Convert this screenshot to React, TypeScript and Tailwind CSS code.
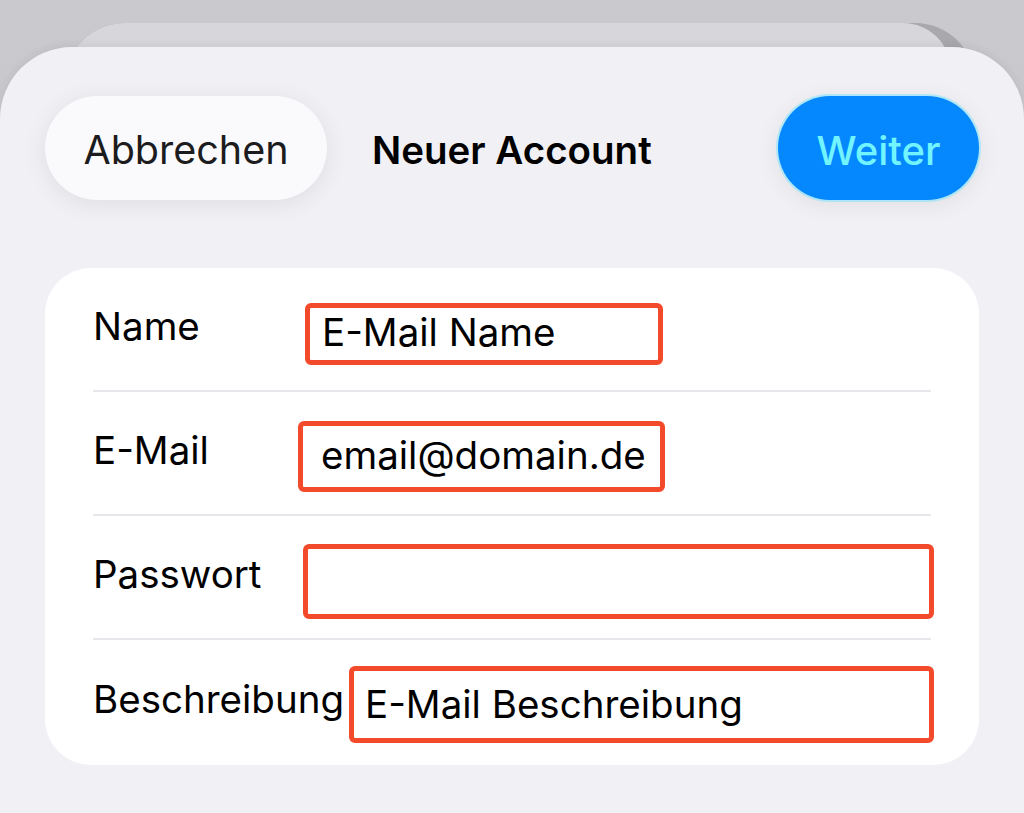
import type { ReactNode } from "react"

const font = { fontFamily: "Inter, 'Noto Sans', sans-serif" }

function Row({
  label,
  labelClass,
  boxClass,
  children,
  last,
}: {
  label: string
  labelClass: string
  boxClass: string
  children?: ReactNode
  last?: boolean
}) {
  return (
    <div className={last ? "h-[125px] flex items-center" : "h-[124px] flex items-center border-b-2 border-[#e6e6eb]"}>
      <span className={`shrink-0 text-[38.5px] leading-none text-black -mt-[6px] ${labelClass}`}>{label}</span>
      <div className={`shrink-0 flex items-center border-[5px] border-[#f24a2b] rounded-[6px] bg-white ${boxClass}`}>
        {children}
      </div>
    </div>
  )
}

export default function App() {
  return (
    <div className="w-[1024px] h-[813px] overflow-hidden bg-gradient-to-b from-[#cacace] to-[#bdbdc2] pt-[23px]" style={font}>
      {/* stacked sheets behind */}
      <div className="ml-[65px] mr-[49px] h-[60px] rounded-t-[60px] bg-[#a8a8ad]">
        <div className="h-full mr-[24px] rounded-t-[60px] rounded-tr-[48px] bg-[#d6d6db]" />
      </div>

      <div className="-mt-[36px] h-[800px] rounded-t-[72px] bg-[#f0f0f5] shadow-[0_-2px_8px_rgba(0,0,0,0.06)]">
        <div className="flex items-center pt-[49px] px-[45px]">
          <button className="w-[282px] h-[104px] pt-[5px] rounded-full bg-[#fafafc] shadow-[0_4px_24px_rgba(0,0,0,0.08)] text-[39.5px] text-[#1c1c1e]">
            Abbrechen
          </button>
          <h1 className="ml-[45px] mt-[5px] text-[38.5px] font-semibold text-black">Neuer Account</h1>
          <button className="ml-auto w-[201px] h-[104px] pt-[5px] rounded-full bg-[#0588fd] shadow-[0_0_0_2px_rgba(120,230,255,0.5),0_4px_24px_rgba(0,0,0,0.08)] text-[40px] font-medium text-[#72f4ff]">
            Weiter
          </button>
        </div>

        <div className="mx-[45px] mt-[68px] w-[934px] rounded-[46px] bg-white px-[48px]">
          <Row label="Name" labelClass="w-[212px]" boxClass="w-[358px] h-[62px] mt-[10px] pl-[12px]">
            <span className="text-[38.5px] text-black -mt-[2px]">E-Mail Name</span>
          </Row>
          <Row label="E-Mail" labelClass="w-[205px]" boxClass="w-[367px] h-[71px] mt-[6px] pl-[18px]">
            <span className="text-[38.5px] text-black">email@domain.de</span>
          </Row>
          <Row label="Passwort" labelClass="w-[210px]" boxClass="w-[631px] h-[75px] mt-[8px]" />
          <Row label="Beschreibung" labelClass="w-[256px]" boxClass="w-[585px] h-[77px] mt-[4px] pl-[11px]" last>
            <span className="text-[38.5px] text-black">E-Mail Beschreibung</span>
          </Row>
        </div>
      </div>
    </div>
  )
}
